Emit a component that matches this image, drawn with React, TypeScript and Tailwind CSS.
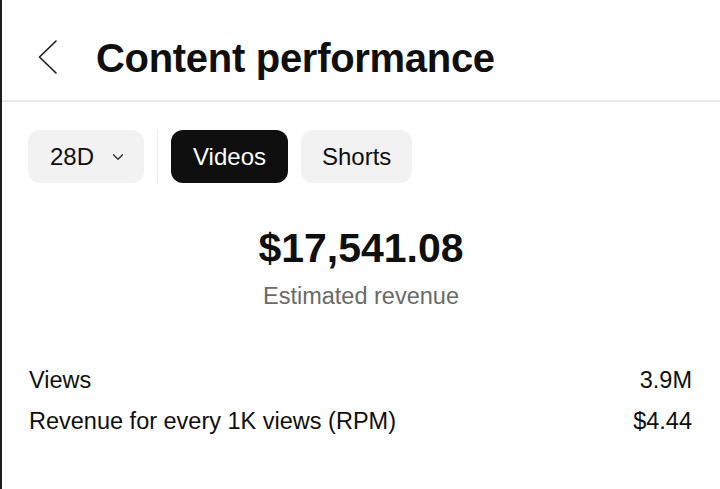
import { ChevronDown } from 'lucide-react';

const stats = [
    { label: "Views", value: "3.9M" },
    { label: "Revenue for every 1K views (RPM)", value: "$4.44" },
];

export default function App() {
    return (
        <div
            className="w-[720px] h-[489px] bg-white border-l-2 border-[#1c1c1c] overflow-hidden text-[#0f0f0f]"
            style={{ fontFamily: '"Liberation Sans", Arial, sans-serif' }}
        >
            {/* Header */}
            <div className="h-[102px] flex items-start pt-[38px] border-b-2 border-[#e8e8e8]">
                <svg width="22" height="34" viewBox="0 0 22 34" className="ml-[35px] mt-[2px] text-[#1a1a1a]">
                    <path d="M19 1 L2.5 17 L19 33" fill="none" stroke="currentColor" strokeWidth="1.6" strokeLinecap="round" strokeLinejoin="round" />
                </svg>
                <h1 className="ml-[37px] text-[40px] font-bold tracking-[-0.3px] leading-none">
                    Content performance
                </h1>
            </div>

            {/* Filters */}
            <div className="flex items-center mt-[28px] pl-[26px] h-[53px]">
                <button className="h-full flex items-center rounded-xl bg-[#f2f2f2] pl-[22px] pr-[17px] text-[24px]">
                    28D
                    <ChevronDown className="w-[18px] h-[18px] ml-[15px] text-[#333]" strokeWidth={1.8} />
                </button>
                <div className="w-px h-full bg-[#ededed] mx-[13px]" />
                <button className="h-full flex items-center rounded-xl bg-[#0f0f0f] text-white px-[22px] text-[24px]">
                    Videos
                </button>
                <button className="h-full flex items-center rounded-xl bg-[#f2f2f2] px-[21px] text-[24px] ml-[13px]">
                    Shorts
                </button>
            </div>

            {/* Total */}
            <div className="flex flex-col items-center mt-[45px]">
                <div className="text-[41px] font-bold leading-none">$17,541.08</div>
                <div className="text-[23.5px] leading-none text-[#6a6a6a] mt-[16px]">Estimated revenue</div>
            </div>

            {/* Stats */}
            <div className="mt-[58px] pl-[27px] pr-[28px] flex flex-col gap-[15px]">
                {stats.map((s) => (
                    <div key={s.label} className="flex justify-between items-center text-[23.5px] leading-[26px]">
                        <span>{s.label}</span>
                        <span>{s.value}</span>
                    </div>
                ))}
            </div>
        </div>
    );
}
